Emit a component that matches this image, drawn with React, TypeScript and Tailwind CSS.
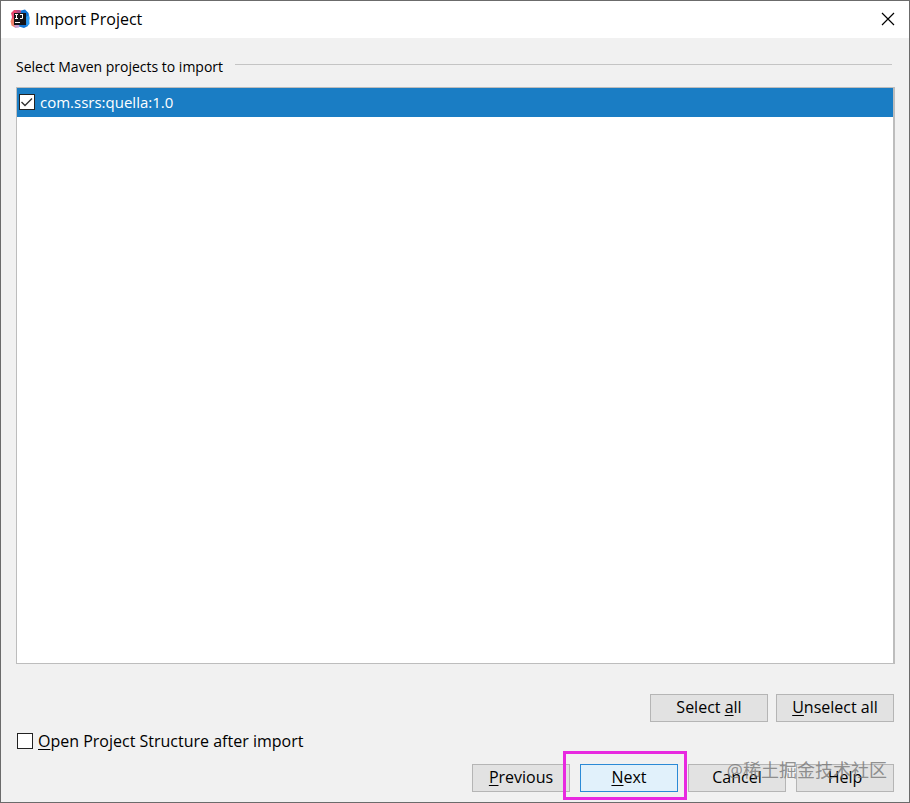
import { useState } from "react";
import type { ReactNode } from "react";

const projects = ["com.ssrs:quella:1.0"];

function Mnemonic({ children }: { children: ReactNode }) {
  return <span className="underline decoration-1 underline-offset-2">{children}</span>;
}

function IdeaLogo() {
  return (
    <svg className="size-5" viewBox="0 0 20 20" aria-hidden="true">
      <path d="M1 4L4 1h5l1 9-6 5-3-3 1-4z" fill="#e8486f" />
      <path d="M.500 12L3 9l4 5 1 4-3 .5-3.500-2z" fill="#f0806a" />
      <path d="M4 15l6 1-1 2.500-4 .5z" fill="#c79ccf" />
      <path d="M6 1.500L10 1l3 2-4 4z" fill="#a94b86" />
      <path d="M11 1.500l4-1L18.500 4l1 5-1.500 8-4 2-5-1.500 2-6z" fill="#1173d4" />
      <path d="M16 8l3-2 .5 9-3 2.500z" fill="#2f9bee" />
      <path d="M4 4h12v12H4z" fill="#131318" />
      <path
        d="M5 5.500h3M6.500 5.500v4M5 9.500h3M10 5.500h3M12.500 5.500v4M10 9.500h2.500"
        fill="none"
        stroke="#fff"
        strokeWidth="1"
      />
      <path d="M5 13.500h5" stroke="#fff" strokeWidth="1" />
    </svg>
  );
}

function CheckBox({
  id,
  checked,
  onChange,
}: {
  id: string;
  checked: boolean;
  onChange: (checked: boolean) => void;
}) {
  return (
    <span className="relative flex size-4 shrink-0">
      <input
        id={id}
        type="checkbox"
        checked={checked}
        onChange={(e) => onChange(e.target.checked)}
        className="size-4 appearance-none border border-[#222] bg-white"
      />
      {checked && (
        <svg className="pointer-events-none absolute inset-0 size-4" viewBox="0 0 16 16" aria-hidden="true">
          <path d="M2.500 8l3.500 3.500L13 4.500" fill="none" stroke="#333" strokeWidth="1.400" />
        </svg>
      )}
    </span>
  );
}

function Button({
  children,
  wide,
  primary,
  onClick,
}: {
  children: ReactNode;
  wide?: boolean;
  primary?: boolean;
  onClick?: () => void;
}) {
  return (
    <button
      type="button"
      onClick={onClick}
      className={`h-7 border pb-[2px] text-center text-base leading-6 ${wide ? "w-[118px]" : "w-[98px]"} ${
        primary ? "border-[#2b8ad6] bg-[#e1f1fb]" : "border-[#b5b5b5] bg-[#e2e2e2]"
      }`}
    >
      {children}
    </button>
  );
}

export default function App() {
  const [selected, setSelected] = useState<string[]>(projects);
  const [openStructure, setOpenStructure] = useState(false);

  return (
    <div className="relative flex min-h-screen flex-col border border-[#6b6b6b] bg-[#f1f1f1] font-['Open_Sans','Noto_Sans_CJK_SC',sans-serif] text-[15px] text-black">
      <header className="flex h-[37px] items-center bg-white pb-px pl-[9px] pr-[14px]">
        <IdeaLogo />
        <h1 className="ml-[5px] text-base leading-6">Import Project</h1>
        <button type="button" aria-label="Close" className="ml-auto">
          <svg className="size-[14px]" viewBox="0 0 14 14" aria-hidden="true">
            <path d="M1 1l12 12M13 1L1 13" stroke="#000" strokeWidth="1.200" />
          </svg>
        </button>
      </header>

      <main className="flex flex-1 flex-col pb-[10px] pl-[15px] pr-[14px] pt-[17px]">
        <div className="flex items-center">
          <h2 className="text-[14px] leading-6">Select Maven projects to import</h2>
          <div className="mb-[5px] ml-3 mr-[3px] h-px flex-1 bg-[#c4c4c4]" />
        </div>

        <ul className="mt-2 flex-1 border border-r-2 border-[#bdbdbd] bg-white">
          {projects.map((name) => (
            <li key={name} className="flex h-[29px] items-center bg-[#1a7dc4] pb-px pl-[2px] text-white">
              <CheckBox
                id={name}
                checked={selected.includes(name)}
                onChange={(on) =>
                  setSelected(on ? [...selected, name] : selected.filter((item) => item !== name))
                }
              />
              <label htmlFor={name} className="ml-[5px] leading-6">
                {name}
              </label>
            </li>
          ))}
        </ul>

        <div className="mr-px mt-[30px] flex justify-end gap-2">
          <Button wide onClick={() => setSelected(projects)}>
            Select <Mnemonic>a</Mnemonic>ll
          </Button>
          <Button wide onClick={() => setSelected([])}>
            <Mnemonic>U</Mnemonic>nselect all
          </Button>
        </div>

        <div className="mt-[7px] flex items-center gap-[5px] pl-px">
          <CheckBox id="open-structure" checked={openStructure} onChange={setOpenStructure} />
          <label htmlFor="open-structure" className="text-base leading-6">
            <Mnemonic>O</Mnemonic>pen Project Structure after import
          </label>
        </div>

        <div className="mr-px mt-[11px] flex justify-end gap-[10px]">
          <Button>
            <Mnemonic>P</Mnemonic>revious
          </Button>
          <div className="relative flex">
            <Button primary>
              <Mnemonic>N</Mnemonic>ext
            </Button>
            <div className="pointer-events-none absolute -bottom-2 -left-[17px] -right-[9px] -top-[13px] border-3 border-[#e829e0]" />
          </div>
          <Button>Cancel</Button>
          <Button>Help</Button>
        </div>
      </main>

      <p className="pointer-events-none absolute bottom-5 right-[22px] text-[18px] leading-6 text-[#777]/80">
        @稀土掘金技术社区
      </p>
    </div>
  );
}
